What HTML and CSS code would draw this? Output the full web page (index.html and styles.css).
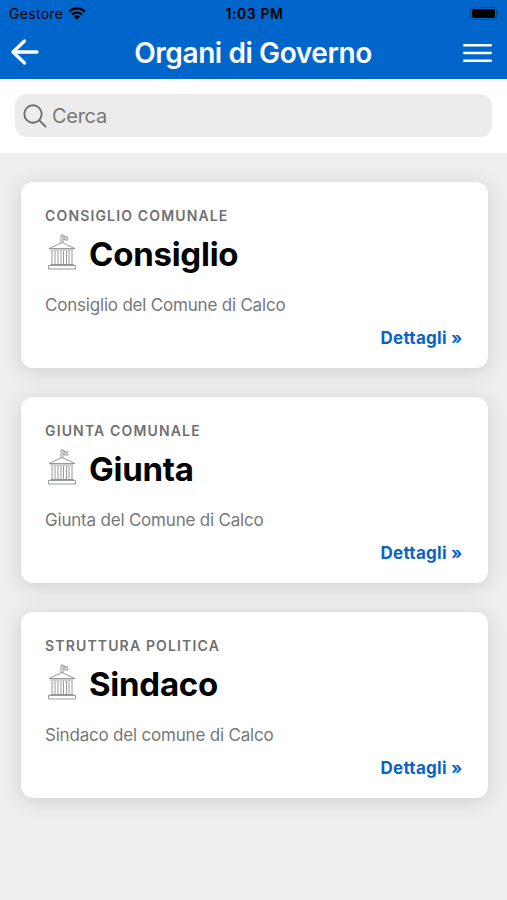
FILE: index.html
```html
<!DOCTYPE html>
<html lang="it">
  <head>
    <meta charset="UTF-8" />
    <meta name="viewport" content="width=device-width, initial-scale=1.0" />
    <title>Organi di Governo</title>
    <link rel="stylesheet" href="styles.css">
  </head>
  <body>
    <!-- Shared icon -->
    <svg class="hidden">
      <symbol id="building" viewBox="0 0 30 36">
        <path d="M14 9V1h2v8M16 2h2v1h3l-1 1.500 1 1.500h-3.500v-1H16M18 2v3M15 8.500L2 14.500h26zM3.500 16h23M5 17v13.500h3V17M11 17v13.500h3V17M16.500 17v13.500h3V17M22 17v13.500h3V17M3.500 30.500h23v1.500M1.500 31.500h27v3.500h-27z" />
      </symbol>
    </svg>

    <header>
      <div class="status-bar">
        <div class="carrier">
          <span>Gestore</span>
          <svg class="wifi" viewBox="0 0 18 13">
            <path d="M1.200 4.600a11.200 11.200 0 0 1 15.600 0M4 7.600a7.200 7.200 0 0 1 10 0" />
            <path class="dot" d="M5.900 9.600a4.500 4.500 0 0 1 6.200 0L9 12.800z" />
          </svg>
        </div>
        <span class="time">1:03 PM</span>
        <svg class="battery" viewBox="0 0 30 13">
          <rect class="shell" x="0.500" y="0.500" width="26" height="12" rx="3.500" />
          <rect x="2" y="2" width="23" height="9" rx="2" />
          <path class="tip" d="M28 4.500q1.500 2 0 4z" />
        </svg>
      </div>
      <div class="nav-bar">
        <svg class="back" viewBox="0 0 28 26">
          <path d="M13.500 2L2 13l11.500 11M2 13h24" />
        </svg>
        <h1>Organi di Governo</h1>
        <svg class="menu" viewBox="0 0 29 18">
          <path d="M1.200 1.200h26.600M1.200 9h26.600M1.200 16.800h26.600" />
        </svg>
      </div>
    </header>

    <div class="search">
      <label class="search-box">
        <svg viewBox="0 0 24 24">
          <circle cx="10" cy="10" r="8.700" />
          <path d="M16.300 16.300L22.500 22.500" />
        </svg>
        <input type="text" placeholder="Cerca" />
      </label>
    </div>

    <main>
      <article class="card">
        <p class="category">CONSIGLIO COMUNALE</p>
        <div class="heading">
          <svg><use href="#building" /></svg>
          <h2>Consiglio</h2>
        </div>
        <p class="description">Consiglio del Comune di Calco</p>
        <a class="details" href="#">Dettagli »</a>
      </article>

      <article class="card">
        <p class="category">GIUNTA COMUNALE</p>
        <div class="heading">
          <svg><use href="#building" /></svg>
          <h2>Giunta</h2>
        </div>
        <p class="description">Giunta del Comune di Calco</p>
        <a class="details" href="#">Dettagli »</a>
      </article>

      <article class="card">
        <p class="category">STRUTTURA POLITICA</p>
        <div class="heading">
          <svg><use href="#building" /></svg>
          <h2>Sindaco</h2>
        </div>
        <p class="description">Sindaco del comune di Calco</p>
        <a class="details" href="#">Dettagli »</a>
      </article>
    </main>
  </body>
</html>
```
FILE: styles.css
```css
* {
  box-sizing: border-box;
}

body {
  margin: 0;
  min-height: 100vh;
  background: #eee;
  color: #000;
  font-family: Inter, "Liberation Sans", sans-serif;
}

h1,
h2,
p {
  margin: 0;
}

svg {
  display: block;
  flex-shrink: 0;
  fill: none;
}

.hidden {
  display: none;
}

/* Header */
header {
  height: 79px;
  background: #0066cc;
}

.status-bar {
  display: grid;
  grid-template-columns: 1fr auto 1fr;
  align-items: center;
  height: 27px;
  padding: 0 7px 0 9px;
  font-size: 14px;
}

.carrier {
  display: flex;
  align-items: center;
  gap: 5px;
  letter-spacing: 0.3px;
}

.wifi {
  width: 18px;
  height: 13px;
  stroke: #000;
  stroke-width: 2.3;
}

.wifi .dot {
  fill: #000;
  stroke: none;
}

.time {
  font-weight: 600;
  letter-spacing: 0.6px;
}

.battery {
  width: 30px;
  height: 13px;
  justify-self: end;
  fill: #000;
}

.battery .shell {
  fill: none;
  stroke: #00458a;
}

.battery .tip {
  fill: #00458a;
}

.nav-bar {
  display: flex;
  align-items: center;
  justify-content: space-between;
  height: 50px;
  padding: 0 15px 0 11px;
}

.nav-bar svg {
  stroke: #fff;
  stroke-linecap: round;
  stroke-linejoin: round;
}

.back {
  width: 28px;
  height: 26px;
  stroke-width: 3.3;
}

.menu {
  width: 29px;
  height: 18px;
  margin-top: 2px;
  stroke-width: 2.4;
}

h1 {
  padding: 2px 0 0 4px;
  color: #fff;
  font-size: 28px;
  font-weight: 600;
  line-height: 34px;
  letter-spacing: -0.4px;
}

/* Search */
.search {
  height: 74px;
  padding: 15px 15px 0;
  background: #fff;
}

.search-box {
  display: flex;
  align-items: center;
  gap: 5px;
  height: 43px;
  padding: 0 8px;
  border-radius: 12px;
  background: #ececec;
}

.search-box svg {
  width: 24px;
  height: 24px;
  stroke: #6e6e6e;
  stroke-width: 1.9;
  stroke-linecap: round;
}

.search-box input {
  flex: 1;
  min-width: 0;
  padding: 0;
  border: none;
  outline: none;
  background: none;
  font-family: inherit;
  font-size: 20px;
  letter-spacing: -0.3px;
}

.search-box input::placeholder {
  color: #777;
}

/* Cards */
main {
  display: flex;
  flex-direction: column;
  gap: 29px;
  padding: 28.5px 19.5px 29px 20.5px;
}

.card {
  display: flex;
  flex-direction: column;
  height: 186px;
  padding: 25px 25px 0 24.5px;
  border-radius: 12px;
  background: #fff;
  box-shadow: 0 3px 20px rgba(0, 0, 0, 0.13);
}

.category {
  color: #707070;
  font-size: 14px;
  font-weight: 600;
  line-height: 18px;
  letter-spacing: 1.15px;
}

.heading {
  display: flex;
  align-items: center;
  gap: 12px;
  height: 42px;
  margin-top: 8.5px;
}

.heading svg {
  width: 30px;
  height: 36px;
  margin: -4px 0 0 2px;
  stroke: #8c9090;
  stroke-width: 0.9;
}

h2 {
  font-size: 33px;
  font-weight: 700;
  line-height: 42px;
  letter-spacing: -0.25px;
}

.description {
  margin-top: 19px;
  color: #777;
  font-size: 17px;
  line-height: 22px;
  letter-spacing: -0.2px;
}

.details {
  align-self: flex-end;
  margin-top: 11px;
  color: #0b63c5;
  font-size: 17px;
  font-weight: 700;
  line-height: 22px;
  letter-spacing: 0.25px;
  text-decoration: none;
}
```
